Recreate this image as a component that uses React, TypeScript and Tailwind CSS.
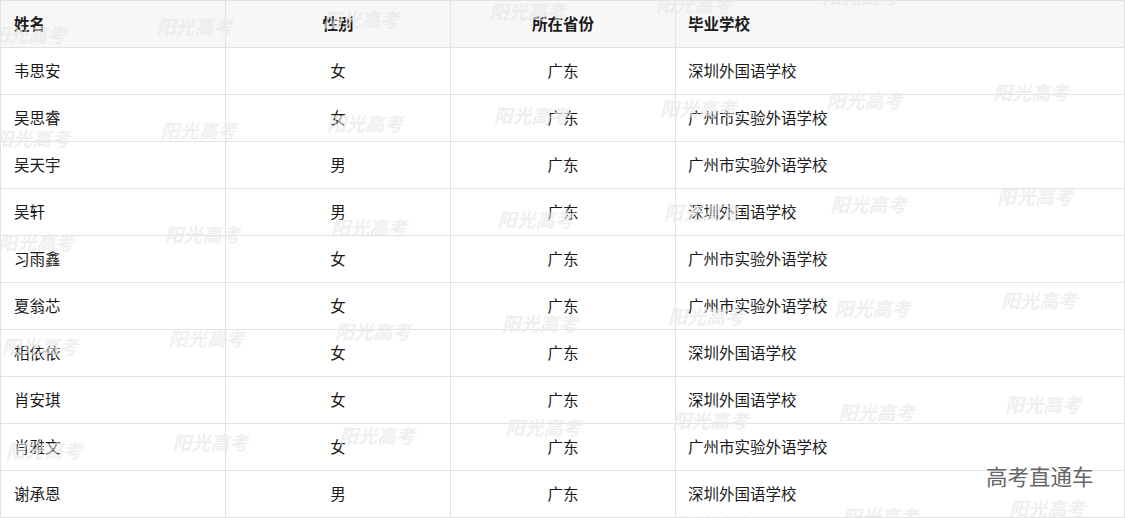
import React from "react";

type Row = { name: string; gender: string; province: string; school: string };

const rows: Row[] = [
  { name: "韦思安", gender: "女", province: "广东", school: "深圳外国语学校" },
  { name: "吴思睿", gender: "女", province: "广东", school: "广州市实验外语学校" },
  { name: "吴天宇", gender: "男", province: "广东", school: "广州市实验外语学校" },
  { name: "吴轩", gender: "男", province: "广东", school: "深圳外国语学校" },
  { name: "习雨鑫", gender: "女", province: "广东", school: "广州市实验外语学校" },
  { name: "夏翁芯", gender: "女", province: "广东", school: "广州市实验外语学校" },
  { name: "相依依", gender: "女", province: "广东", school: "深圳外国语学校" },
  { name: "肖安琪", gender: "女", province: "广东", school: "深圳外国语学校" },
  { name: "肖雅文", gender: "女", province: "广东", school: "广州市实验外语学校" },
  { name: "谢承恩", gender: "男", province: "广东", school: "深圳外国语学校" },
];

// tiled "阳光高考" watermark, drifting up a little per column
const marks: { x: number; y: number }[] = [];
for (let r = 0; r < 6; r++) {
  for (let c = 0; c < 7; c++) {
    marks.push({ x: -10 + c * 166.5 + r * 4, y: 26 + r * 104 - c * 7.6 });
  }
}

const font = { fontFamily: '"Noto Sans CJK SC", "Noto Sans", sans-serif' };

export default function App() {
  return (
    <div className="relative h-[518px] w-[1125px] overflow-hidden bg-white" style={font}>
      <table className="w-[1125px] table-fixed border-collapse text-[15.5px] text-[#1a1a1a]">
        <colgroup>
          <col className="w-[225px]" />
          <col className="w-[225px]" />
          <col className="w-[225px]" />
          <col />
        </colgroup>
        <thead>
          <tr className="h-[47px] bg-[#f7f7f7]">
            <th className="border border-[#e3e3e3] pl-[13px] text-left font-bold">姓名</th>
            <th className="border border-[#e3e3e3] text-center font-bold">性别</th>
            <th className="border border-[#e3e3e3] text-center font-bold">所在省份</th>
            <th className="border border-[#e3e3e3] pl-[12px] text-left font-bold">毕业学校</th>
          </tr>
        </thead>
        <tbody>
          {rows.map((r) => (
            <tr key={r.name} className="h-[47px]">
              <td className="border border-[#e3e3e3] pl-[13px]">{r.name}</td>
              <td className="border border-[#e3e3e3] text-center">{r.gender}</td>
              <td className="border border-[#e3e3e3] text-center">{r.province}</td>
              <td className="border border-[#e3e3e3] pl-[12px]">{r.school}</td>
            </tr>
          ))}
        </tbody>
      </table>

      <div className="pointer-events-none absolute inset-0">
        {marks.map((m, i) => (
          <span
            key={i}
            className="absolute whitespace-nowrap text-[19px] font-bold italic leading-none text-[#e8e8e8]/70"
            style={{ left: m.x, top: m.y, fontFamily: '"Liberation Serif", "Noto Sans CJK SC", serif' }}
          >
            阳光高考
          </span>
        ))}
      </div>

      <span className="pointer-events-none absolute left-[986px] top-[465px] text-[21.5px] leading-none text-[#666]">
        高考直通车
      </span>
    </div>
  );
}
